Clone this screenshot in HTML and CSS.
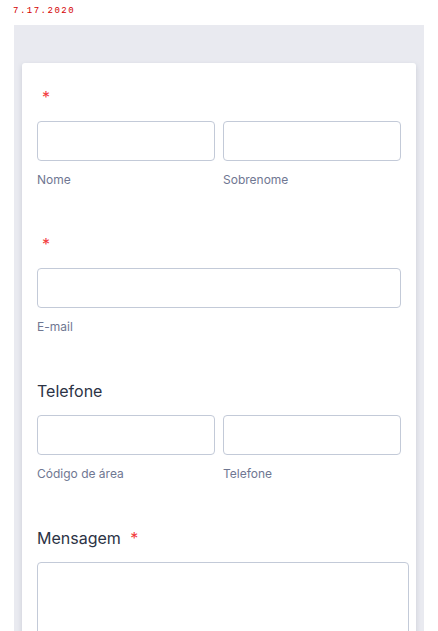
FILE: index.html
```html
<!DOCTYPE html>
<html lang="pt">
<head>
<meta charset="utf-8">
<title>Formulário</title>
<link rel="stylesheet" href="styles.css">
</head>
<body>
<div class="date">7.17.2020</div>
<div class="panel">
  <form class="card">
    <div class="field">
      <div class="label"><span class="req">*</span></div>
      <div class="row two">
        <div class="col"><input class="input" type="text"><div class="sub">Nome</div></div>
        <div class="col"><input class="input" type="text"><div class="sub">Sobrenome</div></div>
      </div>
    </div>
    <div class="field">
      <div class="label"><span class="req">*</span></div>
      <div class="row">
        <div class="col"><input class="input" type="email"><div class="sub">E-mail</div></div>
      </div>
    </div>
    <div class="field">
      <div class="label">Telefone</div>
      <div class="row two">
        <div class="col"><input class="input" type="text"><div class="sub">Código de área</div></div>
        <div class="col"><input class="input" type="text"><div class="sub">Telefone</div></div>
      </div>
    </div>
    <div class="field last">
      <div class="label">Mensagem <span class="req">*</span></div>
      <textarea class="textarea"></textarea>
    </div>
  </form>
</div>
</body>
</html>
```

FILE: styles.css
```css
html, body {
  margin: 0;
  padding: 0;
  background: #ffffff;
  font-family: Inter, "Noto Sans", sans-serif;
}
body {
  height: 631px;
  overflow: hidden;
  display: flex;
  flex-direction: column;
}
.date {
  margin: 5px 0 0 13px;
  font-family: "Liberation Mono", monospace;
  font-size: 9px;
  line-height: 12px;
  letter-spacing: 1.5px;
  color: #d40000;
}
.panel {
  flex: 1;
  min-height: 0;
  overflow: hidden;
  margin: 8px 14px 0 14px;
  padding: 38px 8px 0 8px;
  background: #e9eaf0;
}
.card {
  background: #ffffff;
  border-radius: 3px;
  padding: 24px 15px 0 15px;
  box-shadow: 0 2px 5px rgba(87, 100, 126, 0.22);
  min-height: 100%;
}
.field {
  margin-bottom: 46px;
}
.field.last {
  margin-bottom: 0;
}
.label {
  font-size: 16px;
  line-height: 20px;
  height: 20px;
  color: #2c3345;
  margin-bottom: 14px;
}
.req {
  color: #f23a3c;
  margin-left: 5px;
}
.row {
  display: grid;
  grid-template-columns: 1fr;
  gap: 8px;
}
.row.two {
  grid-template-columns: 1fr 1fr;
}
.col {
  display: flex;
  flex-direction: column;
}
.input {
  box-sizing: border-box;
  display: block;
  width: 100%;
  height: 40px;
  margin: 0;
  border: 1px solid #c3cad8;
  border-radius: 4px;
  background: #ffffff;
  font-family: inherit;
}
.sub {
  margin-top: 11px;
  font-size: 12px;
  line-height: 16px;
  color: #6f7792;
}
.textarea {
  box-sizing: border-box;
  display: block;
  width: calc(100% + 8px);
  height: 160px;
  margin: 0;
  border: 1px solid #c3cad8;
  border-radius: 4px;
  resize: none;
  font-family: inherit;
}
```
